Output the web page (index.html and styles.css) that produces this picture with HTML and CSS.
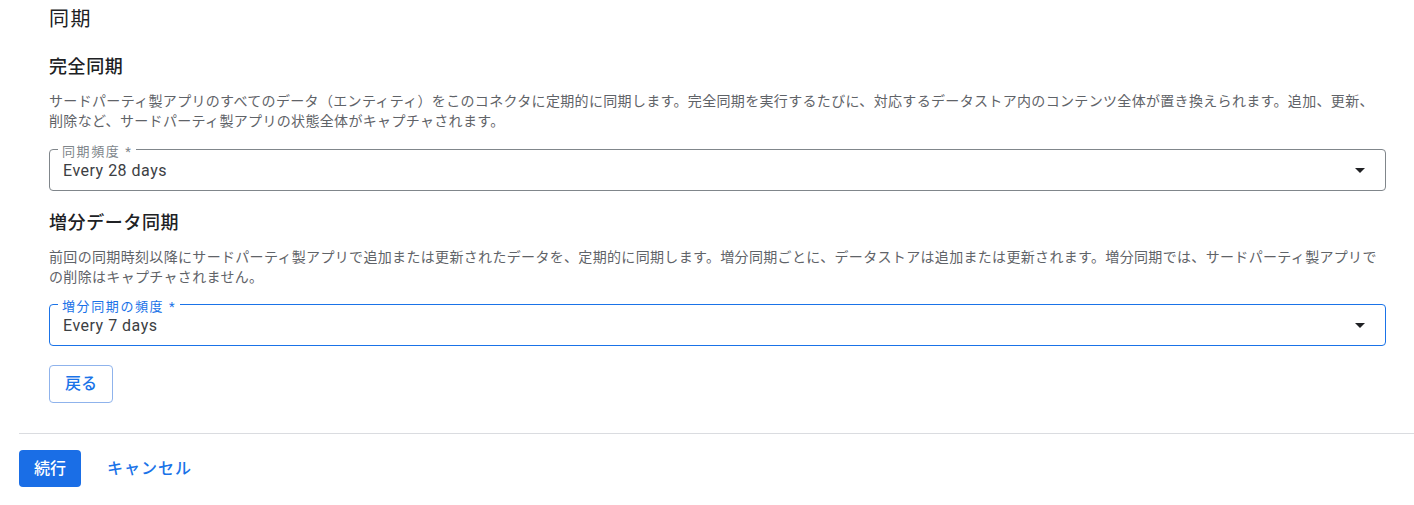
FILE: index.html
```html
<!DOCTYPE html>
<html lang="ja">
<head>
<meta charset="utf-8">
<title>同期</title>
<link rel="stylesheet" href="styles.css">
</head>
<body>
<div class="page">
  <section class="content">
    <h2 class="title">同期</h2>

    <h3 class="heading heading--first">完全同期</h3>
    <p class="desc">サードパーティ製アプリのすべてのデータ（エンティティ）をこのコネクタに定期的に同期します。完全同期を実行するたびに、対応するデータストア内のコンテンツ全体が置き換えられます。追加、更新、<br>削除など、サードパーティ製アプリの状態全体がキャプチャされます。</p>
    <div class="field">
      <span class="field-label">同期頻度 *</span>
      <span class="field-value">Every 28 days</span>
      <svg class="field-arrow" width="10" height="5" viewBox="0 0 10 5"><polygon points="0,0 10,0 5,5"/></svg>
    </div>

    <h3 class="heading">増分データ同期</h3>
    <p class="desc">前回の同期時刻以降にサードパーティ製アプリで追加または更新されたデータを、定期的に同期します。増分同期ごとに、データストアは追加または更新されます。増分同期では、サードパーティ製アプリで<br>の削除はキャプチャされません。</p>
    <div class="field field--focused">
      <span class="field-label">増分同期の頻度 *</span>
      <span class="field-value">Every 7 days</span>
      <svg class="field-arrow" width="10" height="5" viewBox="0 0 10 5"><polygon points="0,0 10,0 5,5"/></svg>
    </div>

    <button class="btn btn-outline" type="button">戻る</button>
  </section>

  <footer class="footer">
    <button class="btn btn-primary" type="button">続行</button>
    <button class="btn btn-text" type="button">キャンセル</button>
  </footer>
</div>
</body>
</html>
```

FILE: styles.css
```css
html, body {
  margin: 0;
  padding: 0;
  background: #ffffff;
}

body {
  font-family: Roboto, "Noto Sans CJK JP", sans-serif;
  color: #202124;
}

.page {
  padding-left: 19px;
}

.content {
  padding: 7px 28px 0 30px;
  display: flex;
  flex-direction: column;
  align-items: flex-start;
}

.title {
  margin: 0;
  font-size: 20px;
  line-height: 24px;
  font-weight: 400;
  letter-spacing: 1.5px;
  color: #202124;
}

.heading {
  margin: 20px 0 0;
  font-size: 18px;
  line-height: 24px;
  font-weight: 500;
  letter-spacing: 0.6px;
  color: #202124;
}

.heading--first {
  margin-top: 24px;
}

.desc {
  margin: 12px 0 0;
  font-size: 14px;
  line-height: 20px;
  letter-spacing: 0.33px;
  color: #5f6368;
  white-space: nowrap;
}

.field {
  position: relative;
  box-sizing: border-box;
  align-self: stretch;
  height: 42px;
  margin-top: 18px;
  border: 1px solid #80868b;
  border-radius: 4px;
  display: flex;
  align-items: center;
  padding: 0 20px 0 13px;
}

.field--focused {
  margin-top: 17px;
  border-color: #1a73e8;
}

.field-label {
  position: absolute;
  top: -5px;
  left: 8px;
  padding: 0 4px;
  background: #ffffff;
  font-size: 13px;
  line-height: 13px;
  letter-spacing: 1.6px;
  color: #80868b;
}

.field--focused .field-label {
  color: #1a73e8;
}

.field-value {
  font-size: 16px;
  line-height: 20px;
  letter-spacing: 0.5px;
  color: #3c4043;
  padding-top: 1px;
}

.field-arrow {
  margin-left: auto;
  fill: #202124;
}

.btn {
  font-family: Roboto, "Noto Sans CJK JP", sans-serif;
  font-size: 16px;
  font-weight: 500;
  line-height: 20px;
  border-radius: 4px;
  cursor: pointer;
  box-sizing: border-box;
}

.btn-outline {
  margin-top: 19px;
  height: 38px;
  padding: 0 15px;
  background: #ffffff;
  border: 1px solid #8fb3ec;
  color: #1a73e8;
}

.footer {
  margin-top: 30px;
  border-top: 1px solid #dadce0;
  padding-top: 16px;
  display: flex;
  align-items: center;
  gap: 26px;
}

.btn-primary {
  height: 37px;
  padding: 0 15px;
  background: #1a6ee6;
  border: none;
  color: #ffffff;
}

.btn-text {
  padding: 0;
  height: 37px;
  background: transparent;
  border: none;
  letter-spacing: 1px;
  color: #1a73e8;
}
```
